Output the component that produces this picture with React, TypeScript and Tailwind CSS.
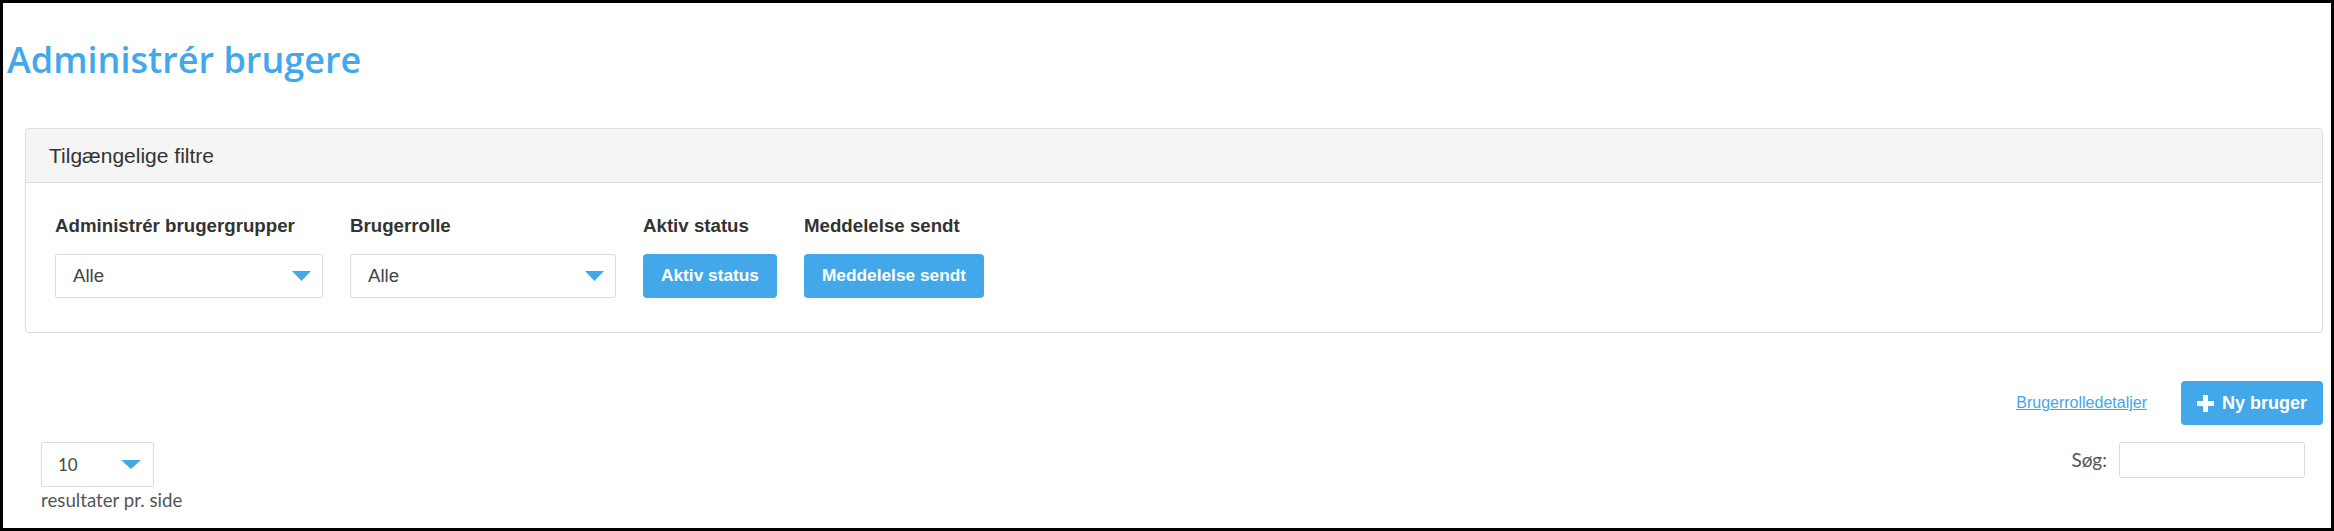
import React from 'react';

function Caret({ w, h }: { w: number; h: number }): React.ReactElement {
  return (
    <svg width={w} height={h} viewBox={`0 0 ${w} ${h}`} className="shrink-0">
      <polygon points={`0,0 ${w},0 ${w / 2},${h}`} fill="#43a8e9" />
    </svg>
  );
}

function FilterSelect({ label, width }: { label: string; width: string }): React.ReactElement {
  return (
    <div className="flex flex-col">
      <div className="text-[18.7px] leading-[26px] font-bold text-[#333333]">{label}</div>
      <div
        className={`mt-[15px] h-[44px] ${width} flex items-center justify-between pl-[17px] pr-[11px] border border-[#dddddd] rounded-[2px] bg-white`}
      >
        <span className="text-[18.7px] text-[#444444]">Alle</span>
        <Caret w={19} h={10} />
      </div>
    </div>
  );
}

function FilterButton({ label }: { label: string }): React.ReactElement {
  return (
    <div className="flex flex-col items-start">
      <div className="text-[18.7px] leading-[26px] font-bold text-[#333333]">{label}</div>
      <button className="mt-[15px] h-[44px] px-[18px] rounded-[4px] bg-[#43a8e9] text-white font-bold text-[17.3px]">
        {label}
      </button>
    </div>
  );
}

export default function App(): React.ReactElement {
  return (
    <div className="w-[2334px] h-[531px] border-[3px] border-black bg-white overflow-hidden font-['Liberation_Sans',Arial,sans-serif]">
      <h1 className="ml-[4px] mt-[35px] text-[36px] leading-[44px] font-semibold text-[#43a8e9] font-['Open_Sans',sans-serif]">
        Administrér brugere
      </h1>

      <div className="mt-[46px] ml-[22px] mr-[8px] border border-[#dddddd] rounded-[4px]">
        <div className="h-[54px] bg-[#f5f5f5] border-b border-[#dddddd] flex items-center pl-[23px] text-[21px] text-[#333333] rounded-t-[4px]">
          Tilgængelige filtre
        </div>
        <div className="flex gap-[27px] pl-[29px] pt-[30px] pb-[34px]">
          <FilterSelect label="Administrér brugergrupper" width="w-[268px]" />
          <FilterSelect label="Brugerrolle" width="w-[266px]" />
          <FilterButton label="Aktiv status" />
          <FilterButton label="Meddelelse sendt" />
        </div>
      </div>

      <div className="mt-[48px] mr-[8px] flex justify-end items-center gap-[34px]">
        <a href="#" className="text-[16px] text-[#43a8e9] underline">
          Brugerrolledetaljer
        </a>
        <button className="h-[44px] pl-[16px] pr-[16px] rounded-[4px] bg-[#43a8e9] text-white font-bold text-[18px] flex items-center gap-[8px]">
          <svg width="17" height="17" viewBox="0 0 17 17">
            <rect x="6" y="0" width="5" height="17" fill="white" />
            <rect x="0" y="6" width="17" height="5" fill="white" />
          </svg>
          Ny bruger
        </button>
      </div>

      <div className="mt-[17px] flex justify-between items-start pl-[38px] pr-[26px]">
        <div className="flex flex-col">
          <div className="w-[113px] h-[45px] border border-[#dddddd] rounded-[2px] flex items-center justify-between pl-[16px] pr-[12px]">
            <span className="text-[17px] text-[#444444] font-['Lato',sans-serif]">10</span>
            <Caret w={20} h={9} />
          </div>
          <span className="mt-[2px] text-[18.7px] leading-[22px] text-[#555555] font-['Lato',sans-serif]">
            resultater pr. side
          </span>
        </div>
        <div className="flex items-center gap-[12px]">
          <span className="text-[19px] text-[#555555] font-['Lato',sans-serif]">Søg:</span>
          <input className="w-[186px] h-[36px] border border-[#dddddd] rounded-[2px] outline-none" />
        </div>
      </div>
    </div>
  );
}
